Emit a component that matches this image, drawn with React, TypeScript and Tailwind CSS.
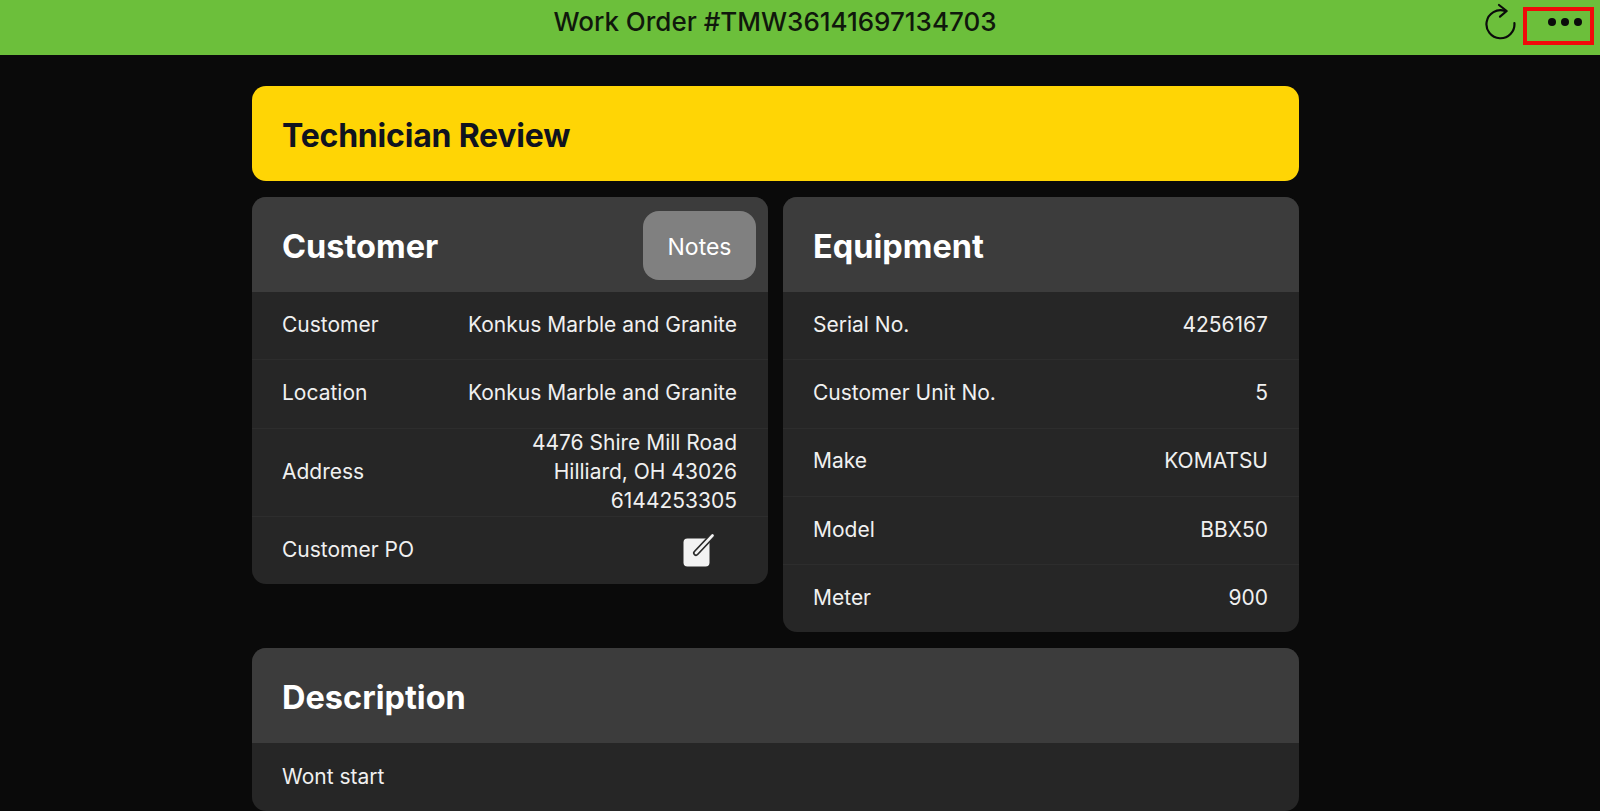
const customerRows = [
  { label: "Customer", value: "Konkus Marble and Granite" },
  { label: "Location", value: "Konkus Marble and Granite" },
];

const equipmentRows = [
  { label: "Serial No.", value: "4256167" },
  { label: "Customer Unit No.", value: "5" },
  { label: "Make", value: "KOMATSU" },
  { label: "Model", value: "BBX50" },
  { label: "Meter", value: "900" },
];

function Row({ label, value }: { label: string; value: string }) {
  return (
    <div className="flex h-[68.25px] items-center justify-between border-b border-[#2d2d2d] pb-[2px] pl-[30px] pr-[31px] last:h-[67px] last:border-b-0">
      <span>{label}</span>
      <span>{value}</span>
    </div>
  );
}

function CardHeader({ title, children }: { title: string; children?: React.ReactNode }) {
  return (
    <div className="flex h-[95px] items-center justify-between bg-[#3c3c3c] pl-[30px] pr-3">
      <h2 className="pt-[6px] text-[32.5px] font-bold text-white">{title}</h2>
      {children}
    </div>
  );
}

function RefreshIcon() {
  return (
    <svg width="32" height="38" viewBox="0 0 32 38" fill="none" stroke="#0b0b0b" strokeWidth="2.2" strokeLinecap="round" strokeLinejoin="round">
      <path d="M21 8A14 14 0 1 0 30.4 20" />
      <path d="M15 2l7.7 6-6.7 5.7" />
    </svg>
  );
}

function ComposeIcon() {
  return (
    <svg width="32" height="33" viewBox="0 0 32 33" fill="none">
      <rect x="0.5" y="4.5" width="26" height="28" rx="4" fill="#f2f2f2" />
      <path d="M13 19L29 2" stroke="#2a2a2a" strokeWidth="6" strokeLinecap="round" />
      <path d="M13 19L29.5 1.5" stroke="#f2f2f2" strokeWidth="2.6" strokeLinecap="round" />
    </svg>
  );
}

export default function App() {
  return (
    <div className="h-[811px] overflow-hidden bg-[#0a0a0a] font-['Inter',sans-serif] text-[21px] text-[#f0f0f0]">
      <header className="relative flex h-[55px] items-start justify-center bg-[#6cbf3b] pr-[50px] pt-[2px] text-[26px] font-medium text-[#10180c]">
        <span>Work Order #TMW36141697134703</span>
        <div className="absolute right-[6px] top-[3px] flex items-start gap-[7px]">
          <RefreshIcon />
          <div className="mt-[4px] flex h-[38px] w-[71px] items-start justify-end gap-[5px] border-[4px] border-[#f00a0a] pr-[8px] pt-[7px]">
            <span className="h-2 w-2 rounded-full bg-[#0b0b0b]" />
            <span className="h-2 w-2 rounded-full bg-[#0b0b0b]" />
            <span className="h-2 w-2 rounded-full bg-[#0b0b0b]" />
          </div>
        </div>
      </header>

      <main className="ml-[252px] mt-[31px] flex w-[1047px] flex-col gap-4">
        <div className="flex h-[95px] items-center rounded-[14px] bg-[#ffd505] px-[30px]">
          <h1 className="pt-[4px] text-[32px] font-bold tracking-[-0.2px] text-[#10131f]">Technician Review</h1>
        </div>

        <div className="flex items-start gap-[15px]">
          <section className="w-[516px] overflow-hidden rounded-[14px] bg-[#262626]">
            <CardHeader title="Customer">
              <button type="button" className="mt-[2px] flex h-[69px] w-[113px] items-center justify-center rounded-[16px] bg-[#808080] pt-[3px] text-[23px] text-white">
                Notes
              </button>
            </CardHeader>
            {customerRows.map((row) => (
              <Row key={row.label} label={row.label} value={row.value} />
            ))}
            <div className="flex h-[88.5px] items-center justify-between border-b border-[#2d2d2d] pb-[2px] pl-[30px] pr-[31px]">
              <span>Address</span>
              <span className="text-right leading-[29px]">
                4476 Shire Mill Road
                <br />
                Hilliard, OH 43026
                <br />
                6144253305
              </span>
            </div>
            <div className="flex h-[67px] items-center justify-between pl-[30px] pr-[53px]">
              <span className="pb-[2px]">Customer PO</span>
              <ComposeIcon />
            </div>
          </section>

          <section className="w-[516px] overflow-hidden rounded-[14px] bg-[#262626]">
            <CardHeader title="Equipment" />
            {equipmentRows.map((row) => (
              <Row key={row.label} label={row.label} value={row.value} />
            ))}
          </section>
        </div>

        <section className="overflow-hidden rounded-[14px] bg-[#262626]">
          <CardHeader title="Description" />
          <div className="flex h-[68px] items-center px-[30px]">
            <span>Wont start</span>
          </div>
        </section>
      </main>
    </div>
  );
}
